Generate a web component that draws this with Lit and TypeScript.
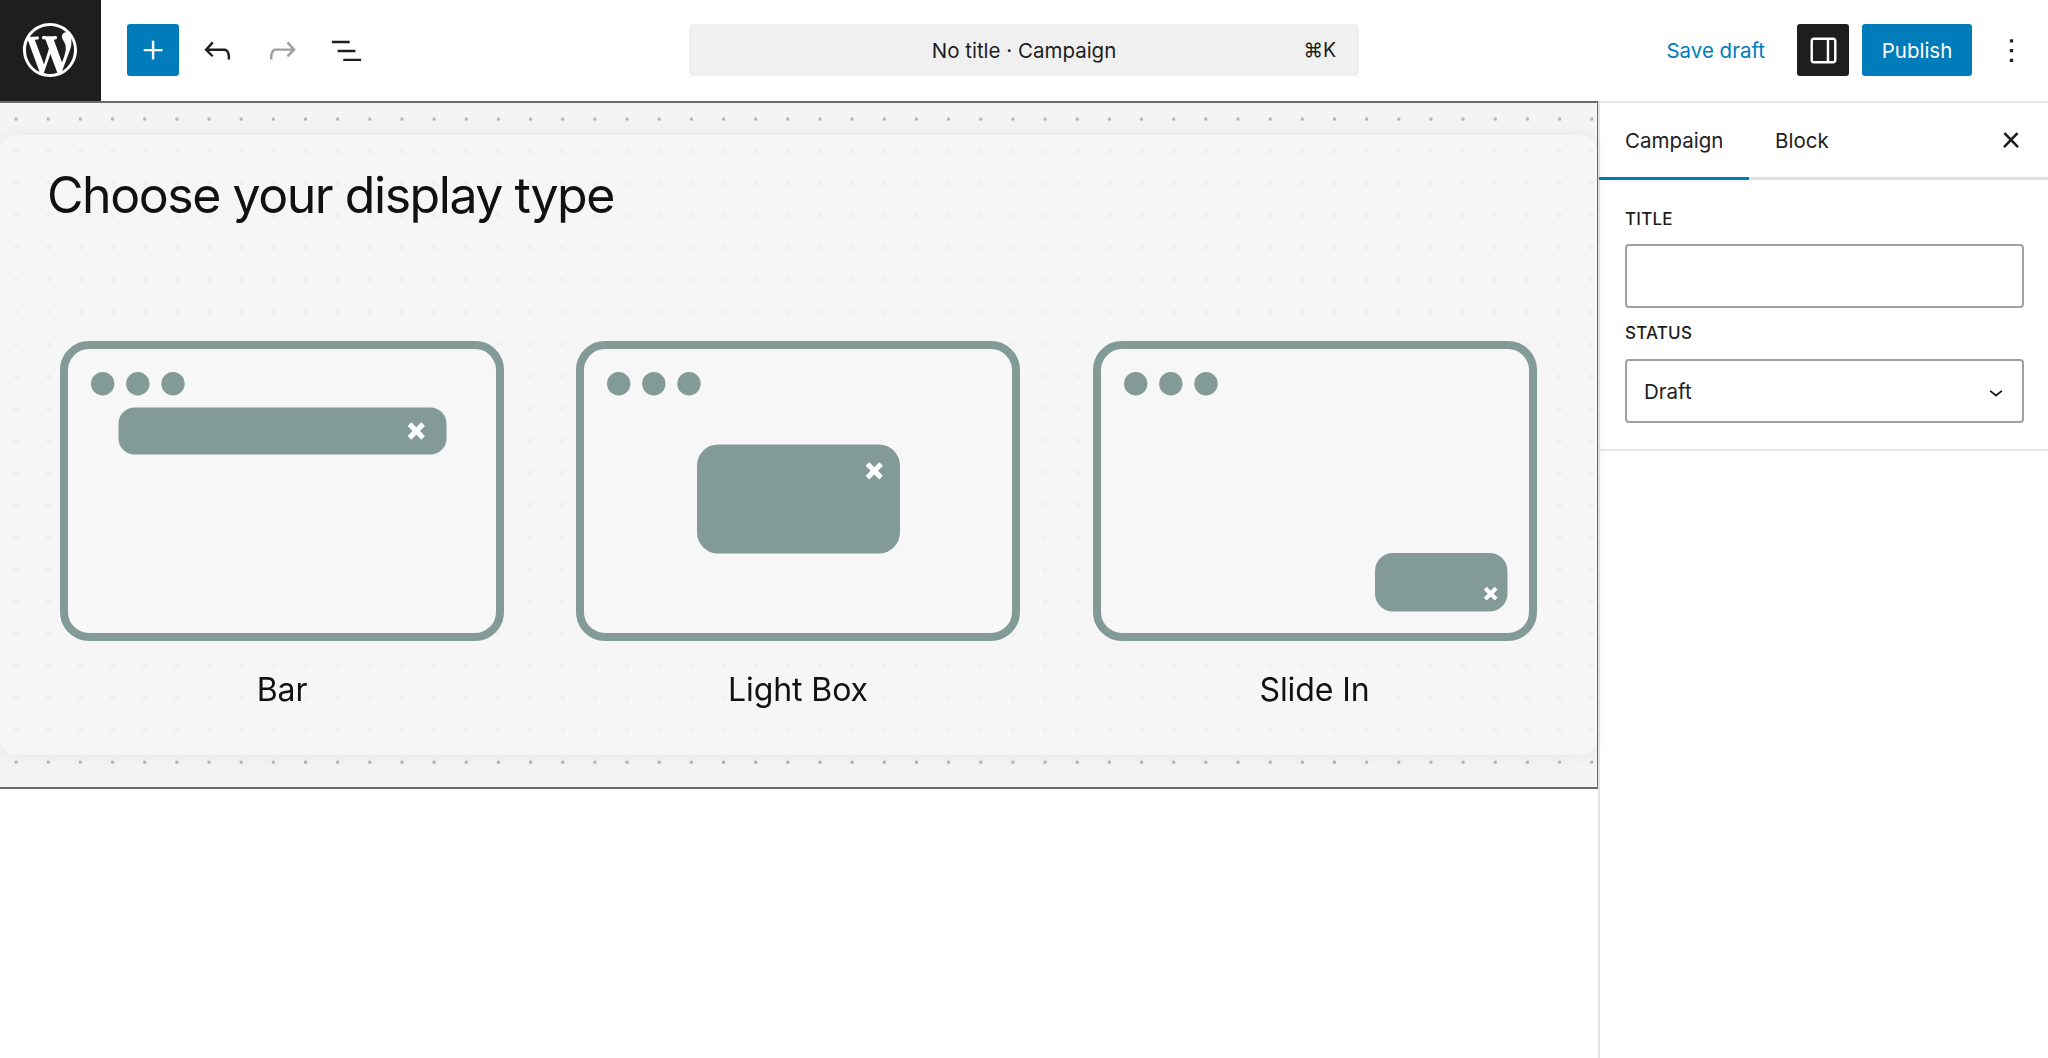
import { LitElement, html, css, svg } from "lit";
import { customElement } from "lit/decorators.js";

const icon = (d: string, cls = "ic", evenodd = false) => html`<svg class=${cls} viewBox="0 0 24 24" fill="currentColor"><path d=${d} fill-rule=${evenodd ? "evenodd" : "nonzero"}></path></svg>`;

const WP = "M20 10c0-5.51-4.49-10-10-10C4.48 0 0 4.49 0 10c0 5.52 4.48 10 10 10 5.51 0 10-4.48 10-10zM7.78 15.37L4.37 6.22c.55-.02 1.17-.08 1.17-.08.5-.06.44-1.13-.06-1.11 0 0-1.45.11-2.37.11-.18 0-.37 0-.58-.01C4.12 2.69 6.87 1.11 10 1.11c2.33 0 4.45.87 6.05 2.34-.68-.11-1.65.39-1.65 1.58 0 .74.45 1.36.9 2.1.35.61.55 1.36.55 2.46 0 1.49-1.4 5-1.4 5l-3.03-8.37c.54-.02.82-.17.82-.17.5-.05.44-1.25-.06-1.22 0 0-1.44.12-2.38.12-.87 0-2.33-.12-2.33-.12-.5-.03-.56 1.2-.06 1.22l.92.08 1.26 3.41zM17.41 10c.24-.64.74-1.87.43-4.25.7 1.29 1.05 2.71 1.05 4.25 0 3.29-1.73 6.24-4.4 7.78.97-2.59 1.94-5.2 2.92-7.78zM6.1 18.09C3.12 16.65 1.11 13.53 1.11 10c0-1.3.23-2.48.72-3.59C3.25 10.3 4.67 14.2 6.1 18.09zm4.03-6.63l2.58 6.98c-.86.29-1.76.45-2.71.45-.79 0-1.57-.11-2.29-.33.81-2.38 1.62-4.74 2.42-7.1z";

const xMark = (cx: number, cy: number, s: number) => {
  const a = s * 0.36;
  return svg`<path d="M${cx - a} ${cy - a}L${cx + a} ${cy + a}M${cx + a} ${cy - a}L${cx - a} ${cy + a}" stroke="#fff" stroke-width=${s * 0.27} fill="none"></path>`;
};

const win = (inner: unknown) => svg`
  <rect x="4" y="4" width="436" height="292" rx="25" fill="#f7f7f7" stroke="#839b97" stroke-width="8"></rect>
  <circle cx="42.7" cy="42.7" r="11.7" fill="#839b97"></circle>
  <circle cx="77.8" cy="42.7" r="11.7" fill="#839b97"></circle>
  <circle cx="113" cy="42.7" r="11.7" fill="#839b97"></circle>
  ${inner}`;

const designs = [
  {
    label: "Bar",
    art: win(svg`<rect x="58.5" y="66.5" width="328" height="47" rx="16" fill="#839b97"></rect>${xMark(356.3, 90, 19)}`),
  },
  {
    label: "Light Box",
    art: win(svg`<rect x="121" y="103.5" width="203" height="109" rx="21" fill="#839b97"></rect>${xMark(298.3, 129.8, 19)}`),
  },
  {
    label: "Slide In",
    art: win(svg`<rect x="282" y="212" width="132.5" height="58.5" rx="18" fill="#839b97"></rect>${xMark(397.7, 252.7, 15)}`),
  },
];

@customElement("app-root")
export class AppRoot extends LitElement {
  static styles = css`
    :host { display: block; height: 1058px; overflow: hidden; background: #fff; color: #1e1e1e; font-family: Inter, "Liberation Sans", sans-serif; }
    * { box-sizing: border-box; }
    .top { height: 101px; display: grid; grid-template-columns: 1fr 670px 1fr; align-items: center; }
    .left { display: flex; align-items: center; gap: 12.5px; }
    .logo { width: 101px; height: 101px; background: #1e1e1e; color: #fff; display: flex; align-items: center; justify-content: center; margin-right: 13.5px; padding: 0 1px 1px 0; }
    .logo svg { width: 54px; height: 54px; }
    .btn { width: 52px; height: 52px; border-radius: 3px; display: flex; align-items: center; justify-content: center; flex: none; margin-bottom: 1px; }
    .ic { width: 39px; height: 39px; display: block; }
    .primary { background: #007cba; color: #fff; }
    .muted { color: #a0a0a0; }
    .command { height: 52px; margin-bottom: 1px; border-radius: 5px; background: #f0f0f0; display: grid; grid-template-columns: 1fr auto 1fr; align-items: center; font-size: 20.5px; padding: 0 23px; }
    .command .title { grid-column: 2; }
    .command .key { grid-column: 3; justify-self: end; font-size: 19.5px; }
    .right { display: flex; align-items: center; justify-content: flex-end; gap: 13px; padding-right: 11px; }
    .save { color: #007cba; font-size: 20.5px; margin-right: 19px; margin-bottom: 1px; }
    .toggle { background: #1e1e1e; color: #fff; }
    .publish { background: #007cba; color: #fff; height: 52px; margin-bottom: 1px; width: 110px; border-radius: 3px; display: flex; align-items: center; justify-content: center; font-size: 20.5px; font-weight: 400; }
    .main { display: grid; grid-template-columns: 1599px 1fr; height: 957px; align-items: start; }
    .canvas { height: 688px; border-top: 2px solid #6b6b6b; border-right: 2px solid #6b6b6b; border-bottom: 2px solid #6b6b6b; background-color: #f4f4f4; background-image: radial-gradient(circle at center, #b4b4b4 0, #b4b4b4 1.4px, transparent 2px); background-size: 32.17px 32.17px; padding: 32px 0 0; }
    .card { height: 620px; border-radius: 16px; background: rgba(247, 247, 247, 0.72); backdrop-filter: blur(1.6px); box-shadow: 0 0 18px rgba(0, 0, 0, 0.06); padding: 28px 60px 0; }
    h1 { margin: 0 0 0 -13px; font-family: Inter, sans-serif; font-weight: 400; font-size: 50px; line-height: 64px; letter-spacing: -1.45px; color: #111; }
    .grid { display: grid; grid-template-columns: repeat(3, 444px); column-gap: 72px; margin-top: 114px; }
    .item { display: flex; flex-direction: column; align-items: center; }
    .item:nth-child(3) { margin-left: 1px; }
    .item svg { width: 444px; height: 300px; display: block; }
    .item span { margin-top: 29px; font-size: 32px; line-height: 40px; letter-spacing: -0.1px; color: #111; }
    .side { height: 957px; border-left: 2px solid #e4e4e4; border-top: 2px solid #e4e4e4; margin-left: -1px; }
    .tabs { height: 77px; border-bottom: 3px solid #e0e0e0; display: flex; align-items: stretch; }
    .tab { font-size: 20.5px; display: flex; align-items: center; padding: 0 26px; height: 77px; padding-bottom: 3px; }
    .tab.on { box-shadow: inset 0 -3px 0 #007cba; width: 150px; margin-left: -1px; }
    .close { margin-left: auto; margin-right: 11px; align-self: center; margin-top: 0; }
    .close .ic { width: 42px; height: 42px; }
    .panel { padding: 29px 24.5px 26px 25px; border-bottom: 2px solid #e8e8e8; display: flex; flex-direction: column; }
    label { font-size: 17px; line-height: 20px; font-weight: 500; letter-spacing: 0.2px; text-transform: uppercase; margin-bottom: 15px; }
    label.status { margin-bottom: 16px; }
    .field { height: 64px; border: 2px solid #a0a0a0; border-radius: 4px; background: #fff; margin-bottom: 15px; display: flex; align-items: center; justify-content: space-between; font-size: 20.5px; padding: 1px 12px 0 17px; }
    .field:last-child { margin-bottom: 0; }
    .chev { width: 28px; height: 28px; display: block; }
  `;

  render() {
    return html`
      <div class="top">
        <div class="left">
          <div class="logo"><svg viewBox="0 0 20 20" fill="currentColor"><path d=${WP}></path></svg></div>
          <div class="btn primary">${icon("M11 12.5V17.5H12.5V12.5H17.5V11H12.5V6H11V11H6V12.5H11Z")}</div>
          <div class="btn">${icon("M18.3 11.7c-.6-.6-1.4-.9-2.3-.9H6.7l2.9-3.3-1.1-1-4.5 5L8.5 16l1-1-2.7-2.7H16c.5 0 .9.2 1.3.5 1 1 1 3.4 1 4.5v.3h1.5v-.2c0-1.5 0-4.3-1.5-5.7z")}</div>
          <div class="btn muted">${icon("M15.6 6.5l-1.1 1 2.9 3.3H8c-.9 0-1.7.3-2.3.9-1.4 1.5-1.4 4.2-1.4 5.6v.2h1.5v-.3c0-1.1 0-3.5 1-4.5.3-.3.7-.5 1.3-.5h9.2L14.5 15l1.1 1.1 4.6-4.6-4.6-5z")}</div>
          <div class="btn">${icon("M3 6h11v1.5H3V6Zm3.5 5.5h11V13h-11v-1.5ZM21 17H10v1.5h11V17Z")}</div>
        </div>
        <div class="command"><span class="title">No title · Campaign</span><span class="key">⌘K</span></div>
        <div class="right">
          <span class="save">Save draft</span>
          <div class="btn toggle">${icon("M18 4H6c-1.1 0-2 .9-2 2v12c0 1.1.9 2 2 2h12c1.1 0 2-.9 2-2V6c0-1.1-.9-2-2-2zm-4 14.5H6c-.3 0-.5-.2-.5-.5V6c0-.3.2-.5.5-.5h8v13zm4.5-.5c0 .3-.2.5-.5.5h-2.5v-13H18c.3 0 .5.2.5.5v12z", "ic", true)}</div>
          <div class="publish">Publish</div>
          <div class="btn">${icon("M13 19h-2v-2h2v2zm0-6h-2v-2h2v2zm0-6h-2V5h2v2z")}</div>
        </div>
      </div>
      <div class="main">
        <div class="canvas">
          <div class="card">
            <h1>Choose your display type</h1>
            <div class="grid">
              ${designs.map((d) => html`<div class="item"><svg viewBox="0 0 444 300">${d.art}</svg><span>${d.label}</span></div>`)}
            </div>
          </div>
        </div>
        <div class="side">
          <div class="tabs">
            <div class="tab on">Campaign</div>
            <div class="tab">Block</div>
            <div class="btn close">${icon("M13 11.9l3.3-3.4-1.1-1-3.2 3.3-3.2-3.3-1.1 1 3.3 3.4-3.5 3.6 1 1L12 13l3.5 3.5 1-1z")}</div>
          </div>
          <div class="panel">
            <label>Title</label>
            <div class="field"></div>
            <label class="status">Status</label>
            <div class="field"><span>Draft</span>${icon("M17.5 11.6L12 16l-5.5-4.4.9-1.2L12 14l4.5-3.6 1 1.2z", "chev")}</div>
          </div>
        </div>
      </div>
    `;
  }
}
